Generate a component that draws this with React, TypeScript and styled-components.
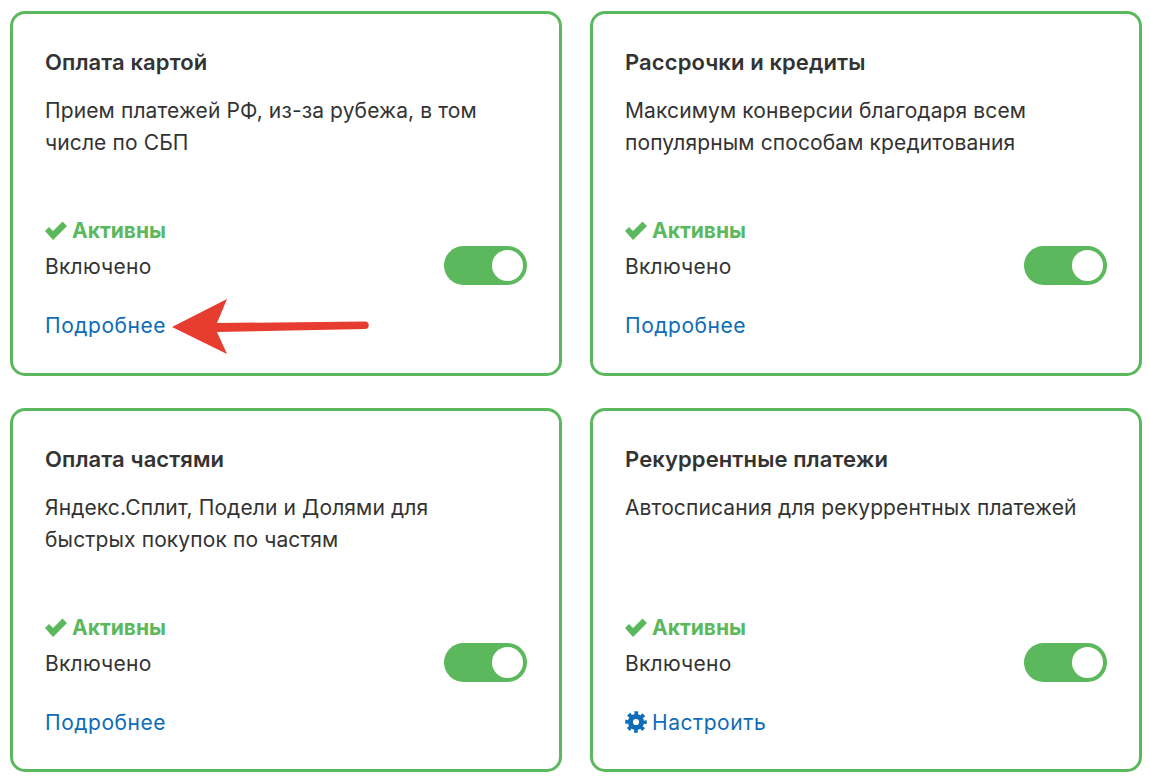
import React from 'react';
import styled, { createGlobalStyle } from 'styled-components';

const GREEN = '#5cb85c';
const BLUE = '#0f6cb6';
const INK = '#333333';

const GlobalStyle = createGlobalStyle`
    html, body {
        margin: 0;
        padding: 0;
        background: #ffffff;
    }

    body {
        font-family: Inter, "Noto Sans", sans-serif;
        color: ${INK};
    }
`;

// ============================== Layout ==============================

const Page = styled.div`
    position: relative;
    box-sizing: border-box;
    width: 1150px;
    height: 783px;
    padding: 11px 0 0 10px;
    overflow: hidden;

    display: grid;
    grid-template-columns: 552px 552px;
    grid-template-rows: 365px 364px;
    column-gap: 28px;
    row-gap: 32px;
`;

const Card = styled.div`
    box-sizing: border-box;
    border: 3px solid ${GREEN};
    border-radius: 15px;
    padding: 34px 32px 0;

    display: flex;
    flex-direction: column;
`;

const Title = styled.div`
    font-size: 22px;
    font-weight: 600;
    line-height: 28px;
    letter-spacing: 0.1px;
    margin-bottom: 19px;
`;

const Description = styled.div`
    font-size: 21px;
    line-height: 32px;
    letter-spacing: 0.12px;
    height: 96px;
    margin-bottom: 24px;
`;

const Status = styled.div`
    display: flex;
    align-items: center;
    gap: 5px;
    height: 30px;

    color: ${GREEN};
    font-size: 21px;
    font-weight: 700;
`;

const ToggleRow = styled.div`
    display: flex;
    align-items: center;
    justify-content: space-between;
    height: 40px;
    margin-top: 1px;
`;

const ToggleLabel = styled.span`
    font-size: 21px;
    letter-spacing: 0.25px;
`;

const Toggle = styled.div`
    box-sizing: border-box;
    width: 83px;
    height: 39px;
    padding: 4px;
    margin-bottom: 2px;
    border-radius: 20px;
    background: ${GREEN};

    display: flex;
    justify-content: flex-end;
`;

const Knob = styled.div`
    width: 31px;
    height: 31px;
    border-radius: 50%;
    background: #ffffff;
`;

const LinkRow = styled.a`
    display: flex;
    align-items: center;
    gap: 5px;
    height: 30px;
    margin-top: 24px;

    color: ${BLUE};
    font-size: 21px;
    letter-spacing: 0.55px;
    text-decoration: none;
`;

const Arrow = styled.svg`
    position: absolute;
    left: 170px;
    top: 296px;
`;

// ============================== Icons ==============================

function CheckIcon(): JSX.Element {
    return (
        <svg width="22" height="19" viewBox="0 0 22 19" fill="currentColor">
            <path d="M0 10 L4 6 L8 10 L17.5 0.5 L22 5 L8 19 Z" />
        </svg>
    );
}

function GearIcon(): JSX.Element {
    return (
        <svg width="22" height="22" viewBox="0 0 22 22" fill="none" stroke="currentColor">
            <circle cx="11" cy="11" r="5.6" strokeWidth="5" />
            <circle cx="11" cy="11" r="9" strokeWidth="3.6" strokeDasharray="3.7 3.37" strokeDashoffset="1.85" />
        </svg>
    );
}

// ============================== Data ==============================

interface CardData {
    title: string;
    text: string[];
    link: string;
    gear?: boolean;
}

const cards: CardData[] = [
    {
        title: 'Оплата картой',
        text: ['Прием платежей РФ, из-за рубежа, в том', 'числе по СБП'],
        link: 'Подробнее',
    },
    {
        title: 'Рассрочки и кредиты',
        text: ['Максимум конверсии благодаря всем', 'популярным способам кредитования'],
        link: 'Подробнее',
    },
    {
        title: 'Оплата частями',
        text: ['Яндекс.Сплит, Подели и Долями для', 'быстрых покупок по частям'],
        link: 'Подробнее',
    },
    {
        title: 'Рекуррентные платежи',
        text: ['Автосписания для рекуррентных платежей'],
        link: 'Настроить',
        gear: true,
    },
];

export default function App(): JSX.Element {
    return (
        <Page>
            <GlobalStyle />
            {cards.map(card => (
                <Card key={card.title}>
                    <Title>{card.title}</Title>
                    <Description>
                        {card.text.map(line => <div key={line}>{line}</div>)}
                    </Description>
                    <Status>
                        <CheckIcon />
                        Активны
                    </Status>
                    <ToggleRow>
                        <ToggleLabel>Включено</ToggleLabel>
                        <Toggle><Knob /></Toggle>
                    </ToggleRow>
                    <LinkRow href="#">
                        {card.gear && <GearIcon />}
                        {card.link}
                    </LinkRow>
                </Card>
            ))}
            <Arrow width="204" height="62" viewBox="0 0 204 62">
                <path d="M2 31 L57 3 L47 27 L195 25.5 A3.7 3.7 0 0 1 195 33 L47 36 L57 58 Z" fill="#e73c30" />
            </Arrow>
        </Page>
    );
}
